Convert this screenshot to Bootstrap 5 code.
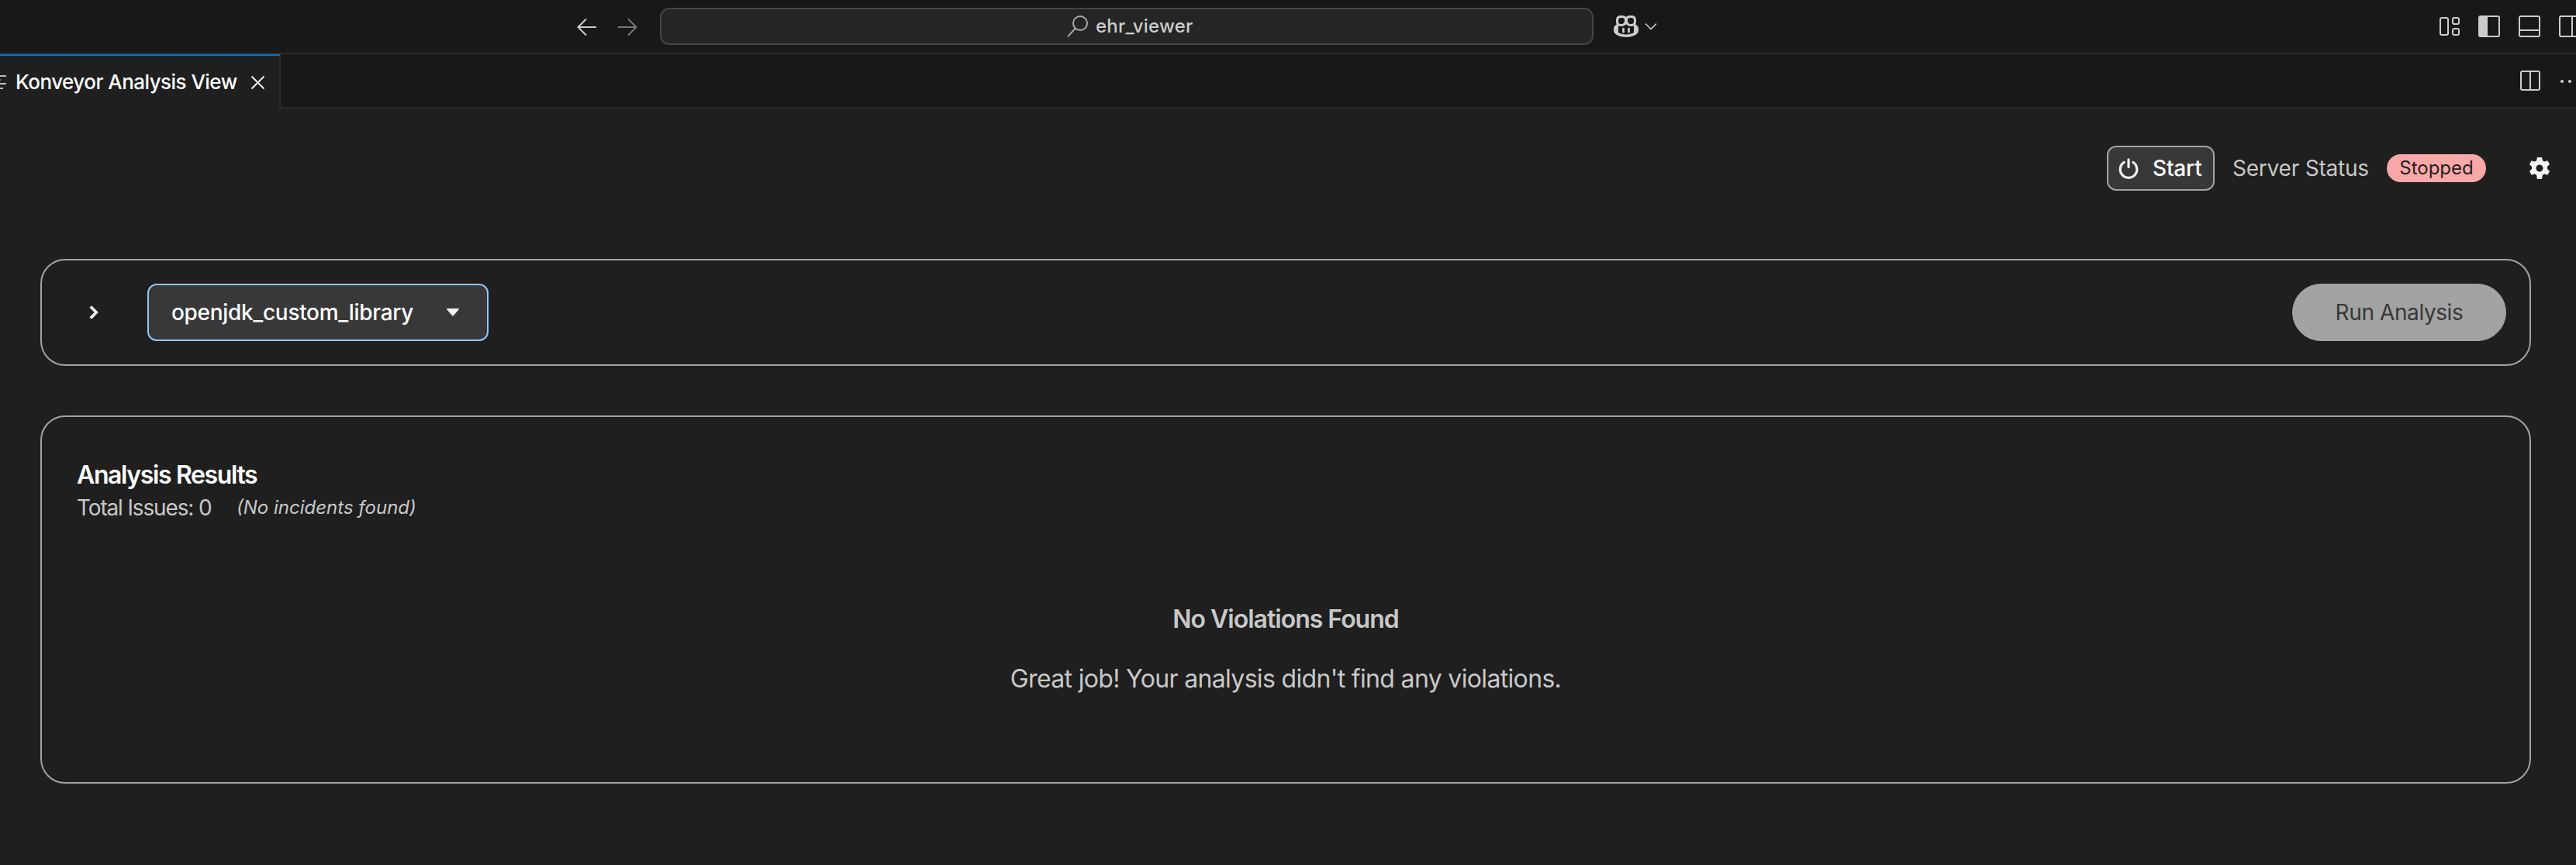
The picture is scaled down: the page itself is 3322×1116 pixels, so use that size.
<!DOCTYPE html>
<html lang="en" data-bs-theme="dark">
<head>
<meta charset="utf-8">
<title>ehr_viewer</title>
<link href="https://cdn.jsdelivr.net/npm/bootstrap@5.3.0/dist/css/bootstrap.min.css" rel="stylesheet">
<style>
body{background:#1f1f1f;color:#c8c8c8;font-family:Inter,"Liberation Sans",sans-serif;font-size:28px;line-height:36px;height:1116px;overflow:hidden}
svg{display:block;flex:none;overflow:visible}
.title-bar{height:70px;background:#181818;border-bottom:2px solid #2b2b2b;color:#ccc;padding-left:745px}
.title-bar>*{height:68px}
.nav-forward{margin-left:28px}
.command-center{width:1204px;height:48px;margin-left:30px;background:#252525;border:2px solid #454545;border-radius:12px;font-size:24px;font-weight:500;letter-spacing:.2px;padding-left:523px}
.command-text{margin-left:9px}
.copilot-icon{margin-left:26px}
.copilot-caret{margin-left:8px}
.layout-controls{gap:24px}
.tab-strip{height:70px;background:#181818}
.view-tab{width:362px;background:#1f1f1f;border-top:2px solid #0078d4;border-right:2px solid #2b2b2b;color:#fff;font-size:26px;font-weight:500;letter-spacing:-.54px}
.tab-label{margin-left:12px}
.tab-close{margin-right:19px}
.strip-rest{border-bottom:2px solid #2b2b2b;color:#ccc}
.more-dots{margin-left:26px}
.view-actions{margin-top:48px;height:58px;padding-right:34px}
.btn-start{--bs-btn-color:#fff;--bs-btn-bg:#383838;--bs-btn-border-color:#a3a3a3;--bs-btn-border-width:2px;--bs-btn-border-radius:12px;width:139px;height:58px;padding:0 0 0 13px;font-size:28px;font-weight:500;letter-spacing:-.2px}
.start-label{margin-left:18px}
.status-label{margin-left:23px;width:173px;letter-spacing:-.22px}
.status-badge{margin-left:26px;width:128px;height:36px;background:#f9a8a8;color:#1f1f1f;font-size:24px;font-weight:400;line-height:36px;padding:0;border-radius:18px}
.gear-icon{margin-left:56px}
.panel-box{--bs-card-bg:#1f1f1f;--bs-card-border-color:#a3a3a3;--bs-card-border-width:2px;--bs-card-border-radius:32px;--bs-card-inner-border-radius:30px;--bs-card-color:#c8c8c8;margin-left:52px;width:3212px}
.toolbar-box{height:138px;margin-top:88px;padding:0 30px 0 61px}
.btn-profile{--bs-btn-color:#fff;--bs-btn-bg:#383838;--bs-btn-border-color:#92c5f9;--bs-btn-border-width:2px;--bs-btn-border-radius:12px;margin-left:63px;width:440px;height:74px;padding:0 36px 0 29px;font-size:28px;font-weight:500;letter-spacing:-.31px}
.btn-run{--bs-btn-disabled-bg:#a3a3a3;--bs-btn-disabled-color:#383838;--bs-btn-disabled-border-color:#a3a3a3;--bs-btn-disabled-opacity:1;width:276px;height:74px;font-size:28px;letter-spacing:-.4px;padding:0}
.results-box{height:475px;margin-top:64px;padding:54px 45px 0 45px}
.results-title{font-size:32px;font-weight:600;letter-spacing:-1.38px;line-height:42px;color:#fff}
.issue-total{letter-spacing:-1.15px;line-height:42px;width:206px}
.issue-note{font-size:24px}
.empty-title{margin-top:102px;font-size:32px;font-weight:600;letter-spacing:-1px;line-height:42px;color:#c8c8c8}
.empty-text{margin-top:35px;font-size:32px;letter-spacing:-.66px;line-height:42px}
</style>
</head>
<body>
<header class="title-bar d-flex align-items-start">
  <div class="d-flex align-items-center">
    <svg width="24" height="24" viewBox="0 0 24 24" fill="none" stroke="#ccc" stroke-width="2"><path d="M24 13H1M11 2.500.5 13 11 23.500"/></svg>
    <svg class="nav-forward" width="24" height="24" viewBox="0 0 24 24" fill="none" stroke="#777" stroke-width="2"><path d="M0 13H23M13 2.500 23.500 13 13 23.500"/></svg>
    <div class="command-center d-flex align-items-center">
      <svg width="28" height="28" viewBox="0 0 28 28" fill="none" stroke="#aaa" stroke-width="2"><circle cx="17" cy="10" r="9"/><path d="M10.800 16.500 1 27.300"/></svg>
      <span class="command-text">ehr_viewer</span>
    </div>
    <svg class="copilot-icon" width="32" height="28" viewBox="0 0 32 28"><path fill="#ccc" fill-rule="evenodd" d="M9 0c3 0 5.500.4 7 1.800C17.500.4 20 0 23 0c4.500 0 6 2.500 6 6.500 0 2-.2 3.700-.6 5.200C30.800 12.800 32 14.700 32 17v2.500C32 24 24.500 28 16 28S0 24 0 19.500V17c0-2.300 1.200-4.200 3.600-5.300C3.200 10.200 3 8.500 3 6.500 3 2.500 4.500 0 9 0ZM9.500 3C6.800 3 6 4 6 7s1 4 3.500 4c3.200 0 4.500-1.500 4.500-5 0-2.200-1-3-4.500-3Zm13 0C19 3 18 3.800 18 6c0 3.500 1.300 5 4.500 5C25 11 26 10 26 7s-.8-4-3.500-4ZM6 13.600V22c2.500 1.600 6 2.500 10 2.500s7.500-.9 10-2.500v-8.400c-1 .3-2.200.4-3.500.4-2.800 0-5-1-6.500-2.700C14.500 13 12.300 14 9.500 14c-1.300 0-2.500-.1-3.500-.4Z"/><path d="M12.500 17.200v4M19.500 17.200v4" stroke="#ccc" stroke-width="2.800" stroke-linecap="round"/></svg>
    <svg class="copilot-caret" width="16" height="10" viewBox="0 0 16 10" fill="none" stroke="#ccc" stroke-width="1.600"><path d="M1 1.500 8 8.500 15 1.500"/></svg>
  </div>
  <div class="layout-controls d-flex align-items-center ms-auto">
    <svg width="26" height="24" viewBox="0 0 26 24" fill="none" stroke="#ccc" stroke-width="2"><rect x="1" y="1" width="10" height="22" rx="2"/><rect x="17" y="1" width="8" height="8" rx="2"/><rect x="17" y="15" width="8" height="8" rx="2"/></svg>
    <svg width="28" height="28" viewBox="0 0 28 28" fill="none" stroke="#ccc" stroke-width="2"><rect x="1" y="1" width="26" height="26" rx="2"/><path fill="#ccc" stroke="none" d="M1 1h11v26H1z"/></svg>
    <svg width="28" height="28" viewBox="0 0 28 28" fill="none" stroke="#ccc" stroke-width="2"><rect x="1" y="1" width="26" height="26" rx="2"/><path d="M1 19h26"/></svg>
    <svg width="22" height="28" viewBox="0 0 22 28" fill="none" stroke="#ccc" stroke-width="2"><rect x="1" y="1" width="26" height="26" rx="2"/><path d="M17 1v26"/></svg>
  </div>
</header>

<nav class="tab-strip d-flex">
  <div class="view-tab d-flex align-items-center">
    <svg width="8" height="22" viewBox="0 0 8 22" stroke="#bbb" stroke-width="2"><path d="M0 3h8M0 13h8M0 19h4"/><path d="M0 8h1" stroke="#777"/></svg>
    <span class="tab-label">Konveyor Analysis View</span>
    <svg class="tab-close ms-auto" width="17" height="17" viewBox="0 0 17 17" stroke="#eee" stroke-width="2"><path d="M.5.5 16.500 16.500M16.500.5.5 16.500"/></svg>
  </div>
  <div class="strip-rest flex-grow-1 d-flex align-items-center justify-content-end">
    <svg width="26" height="26" viewBox="0 0 26 26" fill="none" stroke="#ccc" stroke-width="2"><rect x="1" y="1" width="24" height="24" rx="2"/><path d="M13 1v24"/></svg>
    <svg class="more-dots" width="20" height="4" viewBox="0 0 20 4" fill="#ccc"><circle cx="2" cy="3" r="2.100"/><circle cx="12" cy="3" r="2.100"/></svg>
  </div>
</nav>

<main>
  <div class="view-actions d-flex align-items-center justify-content-end">
    <button class="btn btn-start d-flex align-items-center" type="button">
      <svg width="26" height="26" viewBox="0 0 26 26" fill="none" stroke="#f2f2f2" stroke-width="3.200" stroke-linecap="round"><path d="M7.200 5.400A10.800 10.800 0 1 0 18.800 5.400M13 1.800V11.500"/></svg>
      <span class="start-label">Start</span>
    </button>
    <span class="status-label text-nowrap">Server Status</span>
    <span class="badge status-badge">Stopped</span>
    <svg class="gear-icon" width="26" height="28" viewBox="0 0 26 28"><path fill="#f2f2f2" fill-rule="evenodd" d="M10 0h6l1 4.200 2.400 1.400 4-1.300L26 8.900l-3 3v3.200l3 3-2.600 4.600-4-1.300L17 22.800 16 28h-6L9 22.800l-2.400-1.400-4 1.300L0 18.100l3-3v-3.200l-3-3 2.600-4.600 4 1.300L9 4.200ZM13 9.500a4.500 4.500 0 1 0 0 9 4.500 4.500 0 0 0 0-9Z"/></svg>
  </div>

  <section class="card panel-box toolbar-box flex-row align-items-center">
    <svg width="12" height="18" viewBox="0 0 12 18" fill="none" stroke="#f2f2f2" stroke-width="3.800"><path d="M1.800 1.500 9.200 9 1.800 16.500"/></svg>
    <button class="btn btn-profile d-flex align-items-center justify-content-between" type="button">openjdk_custom_library
      <svg width="16" height="10" viewBox="0 0 16 10" fill="#f2f2f2"><path d="M1 0h14q1.500.3.600 1.500L9 9q-1 1.200-2 0L.4 1.500Q-.5.3 1 0Z"/></svg>
    </button>
    <button class="btn btn-run rounded-pill ms-auto" type="button" disabled>Run Analysis</button>
  </section>

  <section class="card panel-box results-box">
    <h2 class="results-title m-0">Analysis Results</h2>
    <div class="d-flex align-items-center">
      <span class="issue-total text-nowrap">Total Issues: 0</span>
      <em class="issue-note">(No incidents found)</em>
    </div>
    <h3 class="empty-title mb-0 text-center">No Violations Found</h3>
    <p class="empty-text mb-0 text-center">Great job! Your analysis didn't find any violations.</p>
  </section>
</main>
<script src="https://cdn.jsdelivr.net/npm/bootstrap@5.3.0/dist/js/bootstrap.bundle.min.js"></script>
</body>
</html>
